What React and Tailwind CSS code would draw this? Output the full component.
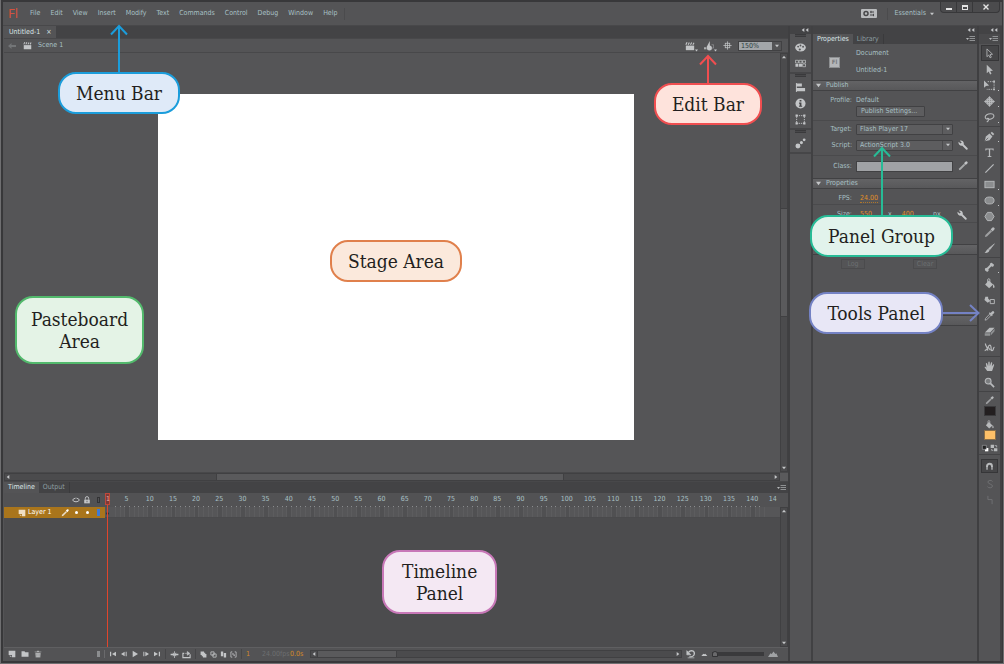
import clsx from 'clsx';

const MENUS = ['File', 'Edit', 'View', 'Insert', 'Modify', 'Text', 'Commands', 'Control', 'Debug', 'Window', 'Help'];

// All glyphs are drawn on a 12x12 grid
const GLYPHS = {
  clapper: (
    <>
      <path d="M1 5.5h10v5.5H1z" fill="currentColor" />
      <path d="M1 4.5 2.5 1.5M3.8 4.5 5.2 1.7M6.6 4.5 8 1.9M9.4 4.5 10.8 2.1" stroke="currentColor" strokeWidth="1.4" />
    </>
  ),
  symbols: (
    <>
      <path d="M7 0v7L3 7.500z" fill="currentColor" />
      <circle cx="6.500" cy="8.300" r="3" fill="currentColor" />
      <path d="M9 4.500h2.500v4H9.500" fill="none" stroke="currentColor" strokeWidth=".7" opacity=".7" />
      <path d="M0 7.500h3v2.500H0z" fill="currentColor" opacity=".8" />
    </>
  ),
  center: (
    <>
      <rect x="3" y="3" width="6" height="6" fill="none" stroke="currentColor" />
      <path d="M6 .5v11M.5 6h11" stroke="currentColor" />
    </>
  ),
  palette: (
    <>
      <ellipse cx="6" cy="6" rx="5.8" ry="4.4" fill="currentColor" />
      <circle cx="3.4" cy="5" r="1" fill="#545456" />
      <circle cx="6" cy="3.8" r="1" fill="#545456" />
      <circle cx="8.8" cy="5.2" r="1" fill="#545456" />
      <circle cx="5.2" cy="8.2" r="1.2" fill="#545456" />
    </>
  ),
  swatches: (
    <>
      <path d="M.5 2.5h3.2v3H.5zM4.4 2.5h3.2v3H4.4zM8.3 2.5h3.2v3H8.3z" fill="none" stroke="currentColor" strokeWidth=".8" />
      <path d="M.5 6.5h3.2v3H.5zM4.4 6.5h3.2v3H4.4z" fill="currentColor" />
      <path d="M8.3 6.5h3.2v3H8.3z" fill="none" stroke="currentColor" strokeWidth=".8" />
    </>
  ),
  align: <path d="M1 1h1v10H1zM2 1.500h5.500V5H2zM2 6.500h9V10H2z" fill="currentColor" />,
  info: (
    <>
      <circle cx="6" cy="6" r="5.5" fill="currentColor" />
      <path d="M5 2.3h2v1.6H5zM4.4 5h2.6v3.4h.8v1.2H4.3V8.4h.8V6.2h-.7z" fill="#464648" />
    </>
  ),
  transform: (
    <>
      <rect x="1.8" y="1.8" width="8.4" height="8.4" fill="none" stroke="currentColor" strokeDasharray="1.4 1" />
      <path d="M.6.6h2.4V3H.6zM9 .6h2.4V3H9zM.6 9H3v2.4H.6zM9 9h2.4v2.4H9z" fill="currentColor" />
    </>
  ),
  motion: (
    <>
      <circle cx="3.2" cy="8.8" r="2.7" fill="currentColor" />
      <circle cx="7" cy="5" r="1.7" fill="currentColor" />
      <circle cx="10" cy="2" r="1.5" fill="currentColor" />
    </>
  ),
  wrench: (
    <path d="M2.2.8a3.6 3.6 0 0 1 4.6 4.4l4.5 4.5a1.1 1.1 0 0 1-1.6 1.6L5.2 6.8A3.6 3.6 0 0 1 .8 2.2L3 4.3 4.5 3z" fill="currentColor" />
  ),
  pencil: (
    <>
      <path d="m1 11 .6-2.2 5.6-5.6 1.6 1.6-5.6 5.6z" fill="currentColor" opacity=".75" />
      <path d="m7.2 2.6 1.7-1.7a1.500 1.500 0 0 1 2.200 2.200L9.400 4.800z" fill="currentColor" />
    </>
  ),
  subselect: <path d="M3.2 1v8.5l2-1.8 1.4 3 1.4-.7-1.4-2.9 2.7-.3z" fill="none" stroke="currentColor" strokeWidth=".9" />,
  select: <path d="M3 .8v9.4l2.2-2 1.4 3.2 1.6-.7-1.4-3.1 3-.3z" fill="currentColor" />,
  freeTransform: (
    <>
      <path d="M0 .5v8l2.2-2L5.6 6z" fill="currentColor" />
      <path d="M4 1.8h7v8.4H3" fill="none" stroke="currentColor" strokeDasharray="1.5 1" />
      <path d="M10 .6h2v2h-2zM10 9.2h2v2h-2z" fill="currentColor" />
    </>
  ),
  rotate3d: (
    <>
      <circle cx="6" cy="6" r="4" fill="currentColor" opacity=".55" />
      <path d="M6 .5v11M.5 6h11" stroke="currentColor" strokeWidth="1.1" />
      <ellipse cx="6" cy="6" rx="2.200" ry="4.8" fill="none" stroke="currentColor" />
      <ellipse cx="6" cy="6" rx="4.800" ry="2.200" fill="none" stroke="currentColor" />
    </>
  ),
  lasso: (
    <path d="M3.4 8C.8 7.2.5 4.6 3 3s7-1.5 7.7.6C11.400 6 8.600 8 5.500 8 4 8 3 7.200 4.200 6.800c1.400-.3 1.200 3-1.200 4.200" fill="none" stroke="currentColor" strokeWidth="1.2" />
  ),
  pen: (
    <>
      <path d="M.8 11.200 2 6l4-3.200L9.200 6 6 10z" fill="currentColor" />
      <path d="M7.200 2.200 8.600.8l2.600 2.600-1.400 1.400z" fill="currentColor" />
      <path d="m1.200 10.800 3.400-3.400" stroke="#545456" strokeWidth=".8" />
    </>
  ),
  text: <path d="M1.500 1.500h9v2.400h-.8l-.5-1.300H6.700v7.200l1.400.4v.8H3.900v-.8l1.400-.4V2.600H2.800l-.5 1.300h-.8z" fill="currentColor" />,
  line: <path d="M1.500 10.500 10.500 1.500" stroke="currentColor" strokeWidth="1.300" />,
  rect: <rect x="1" y="2.500" width="10" height="7" fill="#8b8d8f" stroke="currentColor" />,
  oval: <ellipse cx="6" cy="6" rx="5" ry="3.800" fill="#8b8d8f" stroke="currentColor" />,
  poly: <path d="M3.800 1.500h4.400L11 6l-2.800 4.500H3.800L1 6z" fill="#8b8d8f" stroke="currentColor" />,
  brush: (
    <>
      <path d="M11.400.8 6.400 7.300 5 6z" fill="currentColor" stroke="currentColor" strokeWidth=".6" />
      <path d="M4.600 6.400 6 7.900c-.6 2.500-3 3.300-5.500 2.800 1.800-.6 2-3.400 4.100-4.300z" fill="currentColor" />
    </>
  ),
  bone: (
    <path d="M1 8.200a1.500 1.500 0 0 1 2-1.700l3.500-3.400a1.600 1.600 0 1 1 3-1.200 1.600 1.600 0 1 1-1.400 2.700L4.800 8a1.600 1.600 0 1 1-2.700 1.800A1.500 1.500 0 0 1 1 8.200z" fill="currentColor" />
  ),
  bucket: (
    <>
      <path d="M5.200 2.800 10 7.200l-4.400 4L1.200 7z" fill="currentColor" />
      <path d="M4 5.500V2a1.200 1.200 0 0 1 2.400 0v3" fill="none" stroke="currentColor" />
      <path d="M10 6.500c1.800 1.500 2 4 .7 4.500-1.200 0-1-2.500-.7-4.500z" fill="currentColor" />
    </>
  ),
  inkBottle: (
    <>
      <path d="M1.500 3h3v2L7 7.500 4 9.500.500 6.500z" fill="currentColor" />
      <path d="M6.800 6h4.500v4.500H6.800z" fill="none" stroke="currentColor" />
    </>
  ),
  eyedropper: (
    <>
      <path d="M7.200 3.200 8.800 1.500a1.400 1.400 0 0 1 2 2L9 5.100l.5.600-1 1-3.200-3.200 1-1z" fill="currentColor" />
      <path d="M5.800 4.800 7.300 6.300 3 10.500l-1.800.6.500-1.900z" fill="none" stroke="currentColor" strokeWidth=".9" />
    </>
  ),
  eraser: (
    <>
      <path d="M6 2h5.500L6.800 7.200H1z" fill="currentColor" />
      <path d="M.8 7.800h5.800v2.700H.8zM7.300 7.600l4.200-4.600v2.700L7.300 10.300z" fill="#909294" />
    </>
  ),
  width: (
    <path d="M1.500 1.500c0 3 3 5 2.500 8M.8 9.500c4-.5 3-6 5.500-6s.5 6 2.500 6 1-4 2.700-3.500M4 5l3 4" fill="none" stroke="currentColor" strokeWidth="1.300" />
  ),
  hand: (
    <path d="M3.500 11 .6 6.800c.6-.8 1.400-.4 2.200.5L2 3c.1-1 1.200-1 1.500 0l1 2.600L4.700 1.400c.2-1 1.400-1 1.500 0l.2 4.100 1.200-3.600c.4-.9 1.500-.5 1.400.4L8.500 6l1.300-2c.6-.7 1.500-.2 1.200.6L8.800 11z" fill="currentColor" />
  ),
  zoom: (
    <>
      <circle cx="4.500" cy="4.500" r="3.200" fill="#7b7d7f" stroke="currentColor" strokeWidth="1.200" />
      <path d="m7 7 4 4" stroke="currentColor" strokeWidth="1.900" />
    </>
  ),
  magnet: (
    <>
      <path d="M2.700 10V5.500a3.300 3.300 0 0 1 6.600 0V10" fill="none" stroke="currentColor" strokeWidth="2.600" />
      <path d="M1.200 8h3M7.800 8h3" stroke="#3e3e40" strokeWidth=".8" />
    </>
  ),
  smooth: <path d="M9 3C8 1 3.500 1.200 3.500 3.700S9 6 9 8.500 4 11.200 3 9.200" fill="none" stroke="currentColor" />,
  straighten: <path d="M3.500 1v4.500h5V11" fill="none" stroke="currentColor" />,
  defaultColors: (
    <>
      <path d="M6 6h5v5H6z" fill="#fff" />
      <path d="M2 2h6v6H2z" fill="#222" stroke="currentColor" strokeWidth=".8" />
    </>
  ),
  swapColors: (
    <>
      <path d="M1 1h5v5H1zM6 6.500h5V11H6z" fill="currentColor" />
      <path d="M7 2.500h3v2.500M5 9.500H2.500V7.500" fill="none" stroke="currentColor" strokeWidth="1.200" />
    </>
  ),
  eye: (
    <>
      <path d="M.8 6C3 2.500 9 2.500 11.200 6 9 9.500 3 9.500.8 6z" fill="none" stroke="currentColor" strokeWidth="1.500" />
      <circle cx="6" cy="5.200" r="1.800" fill="#545456" />
    </>
  ),
  lock: (
    <>
      <path d="M1.800 5.500h8.400V11H1.800z" fill="currentColor" />
      <path d="M3.500 5.500V3.400a2.500 2.500 0 0 1 5 0v2.100" fill="none" stroke="currentColor" strokeWidth="1.400" />
      <path d="M5.400 7.200h1.200v2H5.400z" fill="#545456" />
    </>
  ),
  layer: <path d="M1 1h10v10H6V7.500H1zM1.500 8.500 5 11V8.500z" fill="currentColor" />,
  folder: <path d="M.8 2h4.500l1 1.500h5V10H.8z" fill="currentColor" />,
  trash: <path d="M4.300 1h3.400v1.200H11v1.200H1V2.200h3.300zM1.800 4.300h8.400L9.500 11.400h-7zM4 5.500v4.600M6 5.500v4.600M8 5.500v4.600" fill="currentColor" stroke="#545456" strokeWidth=".5" />,
  first: <path d="M1.500 2.500h1.800v7H1.500zM10.500 2.500v7L4.500 6z" fill="currentColor" />,
  stepBack: <path d="M7 2.500v7L1.500 6zM8.500 2.500H10v7H8.500z" fill="currentColor" />,
  play: <path d="M2.500 1v10L10.500 6z" fill="currentColor" />,
  stepForward: <path d="M5 2.500v7L10.500 6zM2 2.500h1.500v7H2z" fill="currentColor" />,
  last: <path d="M8.700 2.500h1.800v7H8.700zM1.500 2.500v7L7.500 6z" fill="currentColor" />,
  centerFrame: <path d="M.8 5h3V3L6 6 3.800 9V7h-3zM11.200 5h-3V3L6 6l2.200 3V7h3zM5.500 1.500h1v9h-1z" fill="currentColor" />,
  loop: (
    <>
      <path d="M3 4.500H1.200v5.700h9.600V5.500" fill="none" stroke="currentColor" strokeWidth="1.500" />
      <path d="M4 4.500h3V2l3.500 2.500L7 7V4.500" fill="currentColor" stroke="currentColor" strokeWidth=".8" />
    </>
  ),
  onion: <path d="M1 1h6v2h2v2h2v6H5V9H3V7H1z" fill="currentColor" />,
  onionOutline: <path d="M1.500 1.500h5.500V7H1.500zM5 5h5.500v5.500H5z" fill="none" stroke="currentColor" strokeWidth="1.400" />,
  editFrames: <path d="M1.500 1h4v8h-4zM6.500 3.500h4V11h-4z" fill="currentColor" />,
  markers: <path d="M4 1.500H1.500v9H4M8 1.500h2.500v9H8M4.500 4.500h1.200v1.200H4.500zM6.500 6.500h1.200v1.200H6.500z" fill="none" stroke="currentColor" strokeWidth="1.300" />,
  undo: (
    <>
      <path d="M3 4c3-3.500 7.500-1.500 7 2S6.500 9.500 4 9.500" fill="none" stroke="currentColor" strokeWidth="1.600" />
      <path d="M1 2v5h5zM2 10.600h8" fill="currentColor" stroke="currentColor" strokeWidth=".8" />
    </>
  ),
  hillSmall: <path d="M2 9 5 5.500 6.500 6.500 8 5.500 11 9z" fill="currentColor" />,
  hillLarge: <path d="M0 9.500 3 5l1.500 1L6.500 3 9 6l1-1 2 4.500z" fill="currentColor" />,
};

function Glyph({ name, className = 'size-[11px]' }) {
  return (
    <svg viewBox="0 0 12 12" aria-hidden="true" className={clsx('shrink-0', className)}>
      {GLYPHS[name]}
    </svg>
  );
}

function Triangle({ dir = 'down', className }) {
  const d = {
    down: 'M0 1h6L3 5z',
    up: 'M0 5h6L3 1z',
    left: 'M5 0v6L1 3z',
    right: 'M1 0v6l4-3z',
  }[dir];
  return (
    <svg viewBox="0 0 6 6" aria-hidden="true" className={clsx('size-1 shrink-0 fill-[#c4c6c8]', className)}>
      <path d={d} />
    </svg>
  );
}

function PanelMenu() {
  return (
    <button aria-label="Panel menu" className="ml-auto flex items-center px-0.5">
      <svg viewBox="0 0 9 6" className="h-[6px] w-[9px]">
        <path d="M0 2h3L1.500 4z" fill="#b5b7b9" />
        <path d="M3.500.5H9M3.500 2.500H9M3.500 4.500H9" stroke="#8f9193" />
      </svg>
    </button>
  );
}

function CollapseBar() {
  return (
    <div className="flex h-2 shrink-0 items-center justify-end bg-[#434345] pr-0.5">
      <Triangle dir="left" className="fill-[#a5a7a9]" />
      <Triangle dir="left" className="fill-[#a5a7a9]" />
    </div>
  );
}

function MenuBar() {
  return (
    <header className="flex h-[23px] shrink-0 items-stretch">
      <span className='w-[27px] pt-px pl-[5px] font-["Noto_Sans",sans-serif] text-[13px] leading-5 text-[#d4523f]'>Fl</span>
      <nav className="flex items-center gap-2.5">
        {MENUS.map((m) => (
          <button key={m}>{m}</button>
        ))}
        <span className="-ml-1 h-3 w-px bg-[#4b4b4d]" />
      </nav>
      <div className="ml-auto flex items-center">
        <svg viewBox="0 0 16 9" className="h-[9px] w-4" aria-hidden="true">
          <rect width="16" height="9" rx="1" fill="#b9bbbd" />
          <circle cx="5" cy="4.500" r="2" fill="none" stroke="#48484a" strokeWidth="1.500" />
          <path d="M9 3h4M9 6h4M10 1.800v2.400M12.500 4.800v2.400" stroke="#48484a" />
        </svg>
        <span className="ml-2.5 h-3 w-px bg-[#4b4b4d]" />
        <button className="ml-1.5 flex items-center gap-1">
          Essentials <Triangle />
        </button>
      </div>
      <div className="mr-0.5 ml-1.5 flex h-[11px] items-center rounded-b-sm border border-t-0 border-[#38383a] bg-[#4b4b4d] text-[#e4e4e4]">
        <button aria-label="Minimize" className="flex h-full w-4 items-end justify-center border-r border-[#38383a] pb-0.5">
          <span className="h-0.5 w-1.5 bg-current" />
        </button>
        <button aria-label="Maximize" className="flex h-full w-4 items-center justify-center border-r border-[#38383a]">
          <span className="h-[5px] w-1.5 border border-t-2 border-current" />
        </button>
        <button aria-label="Close" className="flex h-full w-[26px] items-center justify-center">
          <svg viewBox="0 0 6 6" className="size-1.5">
            <path d="m.5.5 5 5M5.500.5l-5 5" stroke="currentColor" strokeWidth="1.400" />
          </svg>
        </button>
      </div>
    </header>
  );
}

function EditBar() {
  return (
    <>
      <div className="flex h-[12px] shrink-0 items-stretch bg-[#434345]">
        <div className="flex items-center gap-1.5 bg-[#545456] px-[5px] text-[#dbe6e8]">
          Untitled-1
          <button aria-label="Close document">×</button>
        </div>
      </div>
      <div className="flex h-[15px] shrink-0 items-center border-y border-[#48484a] pr-1.5 pl-1">
        <svg viewBox="0 0 8 6" className="h-1.5 w-2" aria-hidden="true">
          <path d="M0 3 3.500 0v2H8v2H3.500v2z" fill="#737577" />
        </svg>
        <Glyph name="clapper" className="mr-1.5 ml-[7px] size-[9px] text-[#c3c5c7]" />
        <span>Scene 1</span>
        <div className="ml-auto flex items-center gap-1.5 text-[#c3c5c7]">
          <button aria-label="Edit scene" className="flex items-end">
            <Glyph name="clapper" className="size-[10px]" />
            <Triangle className="-mb-px size-[3px]" />
          </button>
          <button aria-label="Edit symbols" className="flex items-end">
            <Glyph name="symbols" className="size-[10px]" />
            <Triangle className="-mb-px size-[3px]" />
          </button>
          <button aria-label="Center stage">
            <Glyph name="center" className="block size-[9px]" />
          </button>
          <div className="flex h-[10px] border border-[#414143]">
            <input
              aria-label="Zoom"
              defaultValue="150%"
              className="w-[33px] bg-[#a3a6a9] px-0.5 text-[7px] leading-none text-[#2c3c40]"
            />
            <button aria-label="Zoom levels" className="flex w-[9px] items-center justify-center">
              <Triangle />
            </button>
          </div>
        </div>
      </div>
    </>
  );
}

function Scrollbar({ vertical = false, children }) {
  return (
    <div
      className={clsx(
        'flex items-center justify-between border border-[#404042] bg-[#4b4b4d]',
        vertical ? 'w-2 shrink-0 flex-col' : 'h-2 min-w-0 flex-1',
      )}
    >
      <Triangle dir={vertical ? 'up' : 'left'} className="m-px" />
      {children}
      <Triangle dir={vertical ? 'down' : 'right'} className="m-px" />
    </div>
  );
}

function Pasteboard() {
  return (
    <>
      <div className="flex min-h-0 flex-1">
        <div className="relative flex flex-1 items-center justify-center overflow-hidden bg-[#555557] pt-2 pl-2">
          <div className="flex h-[346px] w-[476px] shrink-0 items-center justify-center bg-white pb-3">
            <Callout className="border-[#e0804c] bg-[#fbe9dc] px-4 py-2">Stage Area</Callout>
          </div>
          <Callout className="absolute top-[243px] left-[11px] border-[#52b96c] bg-[#e4f3e6] px-3.5 py-2.5">
            Pasteboard
            <br />
            Area
          </Callout>
        </div>
        <Scrollbar vertical>
          <span className="h-[26%] w-full border-y border-[#404042] bg-[#5a5a5c]" />
        </Scrollbar>
      </div>
      <div className="flex shrink-0 border-y border-[#48484a]">
        <Scrollbar>
          <span className="-ml-1 h-full w-[45%] border-x border-[#404042] bg-[#5a5a5c]" />
        </Scrollbar>
        <span className="w-2 bg-[#5a5a5c]" />
      </div>
    </>
  );
}

const RULER = Array.from({ length: 28 }, (_, i) => (i + 1) * 5);

function Ruler() {
  return (
    <div className="flex min-w-0 flex-1 items-stretch pr-2">
      <div className="flex w-[10px] shrink-0 justify-start">
        <span className="h-3 w-[5px] border border-[#c0483a] bg-[#7d3b38] text-center leading-[10px] text-[#e9b1a8]">1</span>
      </div>
      {RULER.map((n) => (
        <div key={n} className="flex min-w-0 flex-1 flex-col justify-between text-center">
          <span className="leading-[13px]">{n}</span>
          <span className="flex h-px">
            {[0, 1, 2, 3, 4].map((t) => (
              <i key={t} className="flex-1 border-l border-[#8a8c8e]" />
            ))}
          </span>
        </div>
      ))}
      <span className="w-4 shrink-0 overflow-hidden pl-[5px] leading-[13px]">14</span>
    </div>
  );
}

function Frames() {
  return (
    <div className="flex h-[11px] min-w-0 shrink-0 border-b border-[#4a4a4c] bg-[#565658]">
      <div className="flex w-[10px] shrink-0 items-end">
        <span className="mb-0.5 ml-px size-[3px] rounded-full border border-[#2c2c2e]" />
      </div>
      {RULER.map((n) => (
        <div key={n} className="flex min-w-0 flex-1">
          {[0, 1, 2, 3, 4].map((t) => (
            <i key={t} className={clsx('flex-1 border-l border-[#5c5c5e]', t === 2 && 'bg-[#505052]')} />
          ))}
        </div>
      ))}
      <span className="w-4 shrink-0 border-l border-[#5c5c5e]" />
    </div>
  );
}

function TimelineFooter() {
  const divider = <span className="h-2.5 w-px bg-[#464648]" />;
  return (
    <div className="flex h-[14px] shrink-0 items-center border-t border-[#5f5f61] bg-[#535355] pb-px text-[#c3c5c7]">
      <div className="flex w-[101px] shrink-0 items-center gap-1 border-r border-[#6a6a6c] pl-1">
        {['layer', 'folder', 'trash'].map((g) => (
          <button key={g} aria-label={g}>
            <Glyph name={g} className="mr-px block size-2" />
          </button>
        ))}
        <span className="mr-1 ml-auto h-1.5 w-[3px] bg-[#8b8d8f]" />
      </div>
      <div className="flex items-center gap-[3px] px-1">
        {['first', 'stepBack', 'play', 'stepForward', 'last'].map((g) => (
          <button key={g} aria-label={g}>
            <Glyph name={g} className="block size-2" />
          </button>
        ))}
      </div>
      {divider}
      <div className="flex items-center gap-[3px] px-1">
        {['centerFrame', 'loop'].map((g) => (
          <button key={g} aria-label={g}>
            <Glyph name={g} className="block size-[9px]" />
          </button>
        ))}
      </div>
      {divider}
      <div className="flex items-center gap-[3px] px-1">
        {['onion', 'onionOutline', 'editFrames', 'markers'].map((g) => (
          <button key={g} aria-label={g}>
            <Glyph name={g} className="block size-[7px]" />
          </button>
        ))}
      </div>
      {divider}
      <span className="w-[20px] pl-1 text-[#d48a2a]">1</span>
      <span className="w-7 whitespace-nowrap text-[#6d6f71]">24.00fps</span>
      <span className="mr-1.5 w-3.5 whitespace-nowrap text-[#d48a2a]">0.0s</span>
      <Scrollbar>
        <span className="mr-auto h-full w-20 border-x border-[#404042] bg-[#5a5a5c]" />
      </Scrollbar>
      <button aria-label="Reset timeline zoom" className="mx-1">
        <Glyph name="undo" className="block size-[10px]" />
      </button>
      <Glyph name="hillSmall" className="mr-1 size-2" />
      <input
        type="range"
        aria-label="Timeline zoom"
        defaultValue="0"
        className="h-1 w-[52px] appearance-none bg-[#3a3a3c] [&::-webkit-slider-thumb]:h-1.5 [&::-webkit-slider-thumb]:w-1.5 [&::-webkit-slider-thumb]:appearance-none [&::-webkit-slider-thumb]:rounded-t-full [&::-webkit-slider-thumb]:border [&::-webkit-slider-thumb]:border-[#333335] [&::-webkit-slider-thumb]:bg-[#6a6a6c]"
      />
      <Glyph name="hillLarge" className="mr-2.5 ml-1 size-[10px] text-[#a0a2a4]" />
    </div>
  );
}

function Timeline() {
  return (
    <section className="relative flex h-[179px] shrink-0 flex-col">
      <div className="flex h-[11px] shrink-0 items-stretch bg-[#434345]">
        <button className="bg-[#545456] px-1 text-[#dbe6e8]">Timeline</button>
        <button className="border-r border-[#3a3a3c] px-1 text-[#8c9ea1]">Output</button>
        <PanelMenu />
      </div>
      <div className="flex h-[14px] shrink-0 bg-[#525254]">
        <div className="flex w-[101px] shrink-0 items-center justify-end gap-[3px] pr-[5px] text-[#c3c5c7]">
          <Glyph name="eye" className="size-2" />
          <Glyph name="lock" className="size-2" />
          <span className="ml-[3px] h-1.5 w-[3px] border border-[#333335]" />
        </div>
        <Ruler />
      </div>
      <div className="flex min-h-0 flex-1 bg-[#4c4c4e]">
        <div className="w-[101px] shrink-0">
          <div className="flex h-[11px] items-center bg-[#a9751c] pr-[5px] pl-3.5 text-white">
            <Glyph name="layer" className="mr-0.5 size-2 text-[#f0dfc4]" />
            <span>Layer 1</span>
            <Glyph name="pencil" className="mr-1.5 ml-auto size-2" />
            <span className="mr-2 size-[3px] rounded-full bg-white" />
            <span className="mr-2 size-[3px] rounded-full bg-white" />
            <span className="h-[7px] w-[3px] bg-[#3f7ad6]" />
          </div>
        </div>
        <div className="min-w-0 flex-1">
          <Frames />
        </div>
        <Scrollbar vertical />
      </div>
      <TimelineFooter />
      {/* playhead */}
      <div className="absolute top-[23px] bottom-[14px] left-[103px] z-10 w-px bg-[#e0452c]" />
      <Callout className="absolute top-[68px] left-1/2 -ml-3.5 border-[#c878b8] bg-[#f4e8f3] px-[18px] py-2">
        Timeline
        <br />
        Panel
      </Callout>
    </section>
  );
}

const DOCK = [['palette', 'swatches'], ['align', 'info', 'transform'], ['motion']];

function IconDock() {
  return (
    <aside className="flex w-[23px] shrink-0 flex-col border-r-2 border-[#414143]">
      <CollapseBar />
      {DOCK.map((group) => (
        <div key={group[0]} className="flex flex-col items-center gap-[5px] border-b-2 border-[#464648] pb-[3px] text-[#c3c5c7]">
          <span className="h-[3px] w-[11px] border-y border-[#3a3a3c] bg-[#48484a]" />
          {group.map((g) => (
            <button key={g} aria-label={g}>
              <Glyph name={g} className="block size-[11px]" />
            </button>
          ))}
        </div>
      ))}
    </aside>
  );
}

function SectionHeader({ children, open = true }) {
  return (
    <h2 className="flex h-[11px] shrink-0 items-center gap-[5px] border-y border-[#414143] bg-linear-to-b from-[#636365] to-[#58585a] pl-[3px]">
      {open && <Triangle className="size-[5px]" />}
      {children}
    </h2>
  );
}

function SelectRow({ id, label, value, children }) {
  return (
    <div className="flex h-4 items-center">
      <label htmlFor={id} className="w-[43px] shrink-0 pr-1 text-right">
        {label}
      </label>
      <div className="relative flex h-[11px] flex-1 rounded-[1px] border border-[#414143] bg-[#5d5d5f]">
        <select id={id} className="w-full appearance-none px-[3px] text-[7px] leading-[9px]">
          <option>{value}</option>
        </select>
        <span className="pointer-events-none absolute inset-y-0 right-0 flex w-[10px] items-center justify-center border-l border-[#4a4a4c]">
          <Triangle />
        </span>
      </div>
      <span className="flex w-6 shrink-0 pl-[5px] text-[#c3c5c7]">{children}</span>
    </div>
  );
}

function PropertiesPanel() {
  return (
    <aside className="flex w-[166px] shrink-0 flex-col border-r-2 border-[#3f3f41]">
      <CollapseBar />
      <div className="flex h-[10px] shrink-0 items-stretch bg-[#434345]">
        <button className="bg-[#545456] px-1 text-[#dbe6e8]">Properties</button>
        <button className="border-r border-[#3a3a3c] px-1 text-[#8c9ea1]">Library</button>
        <PanelMenu />
      </div>
      <div className="flex h-9 shrink-0 items-center pl-4">
        <span className="mr-4 flex size-[11px] items-center justify-center border border-[#8d8f91] bg-[#b4b6b8] text-[6px] leading-none font-bold text-[#77797b]">
          Fl
        </span>
        <div className="flex flex-col gap-2 leading-[9px]">
          <span>Document</span>
          <span>Untitled-1</span>
        </div>
      </div>
      <SectionHeader>Publish</SectionHeader>
      <div className="shrink-0 border-b border-[#4a4a4c] pt-1 pb-[3px]">
        <div className="flex leading-[11px]">
          <span className="w-[43px] pr-1 text-right">Profile:</span>
          <span>Default</span>
        </div>
        <button className="ml-[43px] block h-[11px] w-[69px] rounded-[1px] border border-[#414143] bg-[#5d5d5f] pl-1 text-left leading-[9px]">
          Publish Settings...
        </button>
      </div>
      <div className="shrink-0 border-b border-[#4a4a4c] pb-0.5">
        <SelectRow id="target" label="Target:" value="Flash Player 17" />
        <SelectRow id="script" label="Script:" value="ActionScript 3.0">
          <Glyph name="wrench" className="size-[10px]" />
        </SelectRow>
      </div>
      <div className="flex h-[22px] shrink-0 items-center pb-0.5">
        <label htmlFor="doc-class" className="w-[43px] shrink-0 pr-1 text-right">
          Class:
        </label>
        <input id="doc-class" className="h-[11px] min-w-0 flex-1 border border-[#414143] bg-[#a0a2a5]" />
        <span className="w-6 shrink-0 pl-[5px] text-[#c3c5c7]">
          <Glyph name="pencil" className="size-[10px]" />
        </span>
      </div>
      <SectionHeader>Properties</SectionHeader>
      <div className="flex h-4 shrink-0 items-center border-b border-[#4a4a4c] pt-1">
        <span className="w-[43px] pr-1 text-right">FPS:</span>
        <button className="ml-1 border-b border-dotted border-[#b0762a] leading-2 text-[#e08f28]">24.00</button>
      </div>
      <div className="flex h-[18px] shrink-0 items-center border-b border-[#4a4a4c] pt-0.5">
        <span className="w-[43px] pr-1 text-right">Size:</span>
        <button className="ml-1 text-[#e08f28]">550</button>
        <span className="ml-4">x</span>
        <button className="ml-2.5 text-[#e08f28]">400</button>
        <span className="ml-auto w-6">px</span>
        <Glyph name="wrench" className="mr-2.5 size-[10px] text-[#c3c5c7]" />
      </div>
      <div className="h-[21px] shrink-0" />
      <SectionHeader open={false} />
      <div className="flex h-[60px] shrink-0 items-start gap-12 pt-1 pl-7 text-[#6b6f71]">
        <button className="h-[10px] w-6 border border-[#4b4b4d] leading-2">Log</button>
        <button className="h-[10px] w-6 border border-[#4b4b4d] leading-2">Clear</button>
      </div>
      <SectionHeader open={false} />
    </aside>
  );
}

const TOOL_GROUPS = [
  ['subselect', 'select', 'freeTransform', 'rotate3d', 'lasso'],
  ['pen', 'text', 'line', 'rect', 'oval', 'poly', 'pencil', 'brush'],
  ['bone', 'bucket', 'inkBottle', 'eyedropper', 'eraser', 'width'],
  ['hand', 'zoom'],
];
const HAS_FLYOUT = ['freeTransform', 'rotate3d', 'lasso', 'pen', 'rect', 'oval', 'bone'];

function ToolsPanel() {
  return (
    <aside className="flex w-[23px] shrink-0 flex-col border-r-2 border-[#414143] text-[#b8babc]">
      <CollapseBar />
      <div className="flex h-[10px] shrink-0 bg-[#4a4a4c]">
        <PanelMenu />
      </div>
      {TOOL_GROUPS.map((group) => (
        <div key={group[0]} className="border-b border-[#434345] py-px">
          {group.map((tool) => (
            <button
              key={tool}
              aria-label={tool}
              className={clsx(
                'relative mx-auto flex h-4 w-[18px] items-center justify-center',
                tool === 'subselect' && 'border border-[#363638] bg-[#464648]',
              )}
            >
              <Glyph name={tool} />
              {HAS_FLYOUT.includes(tool) && <span className="absolute right-0 bottom-0.5 size-px bg-[#c3c5c7]" />}
            </button>
          ))}
        </div>
      ))}
      <div className="flex flex-col items-center border-b border-[#434345] pt-1">
        <Glyph name="pencil" className="size-[9px]" />
        <button aria-label="Stroke color" className="mt-px h-[10px] w-3 border border-[#3a3a3c] bg-[#231f20]" />
        <Glyph name="bucket" className="mt-1 size-[9px]" />
        <button aria-label="Fill color" className="mt-px h-[10px] w-3 border border-[#8a6f48] bg-[#fdc068]" />
        <div className="flex gap-px pt-1 pb-0.5">
          <button aria-label="Default colors">
            <Glyph name="defaultColors" className="block size-2" />
          </button>
          <button aria-label="Swap colors">
            <Glyph name="swapColors" className="block size-2" />
          </button>
        </div>
      </div>
      <div className="flex flex-col items-center gap-1.5 pt-1">
        <button aria-label="Snap to objects" className="flex h-[14px] w-[17px] items-center justify-center border border-[#363638] bg-[#464648]">
          <Glyph name="magnet" className="size-[9px]" />
        </button>
        <Glyph name="smooth" className="size-[10px] text-[#737577]" />
        <Glyph name="straighten" className="size-[10px] text-[#737577]" />
      </div>
    </aside>
  );
}

function Callout({ className, children }) {
  return (
    <div
      className={clsx(
        'rounded-[18px] border-2 text-center font-["DejaVu_Serif_Condensed","DejaVu_Serif",serif] text-[19px] leading-[22px] whitespace-nowrap text-[#231f20]',
        className,
      )}
    >
      {children}
    </div>
  );
}

function ArrowUp({ className, length }) {
  return (
    <svg width="20" height={length} aria-hidden="true" className={clsx('block', className)} fill="none" strokeWidth="2">
      <path d={`M10 ${length}V2M2 10.500 10 2l8 8.500`} stroke="currentColor" />
    </svg>
  );
}

export default function App() {
  return (
    <div className='relative flex h-screen flex-col overflow-hidden border-x border-b border-x-[#6f6f71] border-b-[#6f6f71] bg-[#545456] font-["DejaVu_Sans_Condensed","Noto_Sans",sans-serif] text-[7px] leading-[9px] text-[#a8c0c5]'>
      <div className="flex min-h-0 flex-1 flex-col border-2 border-r-1 border-[#38383a]">
        <MenuBar />
        <div className="flex min-h-0 flex-1 border-t border-[#48484a] pl-px">
          <main className="flex min-w-0 flex-1 flex-col border-r-2 border-[#3f3f41]">
            <EditBar />
            <Pasteboard />
            <Timeline />
          </main>
          <IconDock />
          <PropertiesPanel />
          <ToolsPanel />
        </div>
      </div>

      {/* Labels over the workspace */}
      <div className="pointer-events-none absolute top-6 left-[57px] flex flex-col items-center">
        <ArrowUp length={50} className="text-[#1b9ddb]" />
        <Callout className="-mt-0.5 border-[#1b9ddb] bg-[#dfeaf8] px-4 py-2">Menu Bar</Callout>
      </div>
      <div className="pointer-events-none absolute top-[54px] right-[241px] flex flex-col items-center">
        <ArrowUp length={31} className="text-[#f04e50]" />
        <Callout className="-mt-0.5 border-[#f04e50] bg-[#fee3dc] px-4 py-2">Edit Bar</Callout>
      </div>
      <div className="pointer-events-none absolute top-[146px] right-[50px] flex flex-col items-center">
        <ArrowUp length={71} className="text-[#27bb96]" />
        <Callout className="-mt-0.5 border-[#27bb96] bg-[#e2f3ec] px-4 py-2">Panel Group</Callout>
      </div>
      <div className="pointer-events-none absolute top-[292px] right-[23px] flex items-center">
        <Callout className="border-[#7482c4] bg-[#e8e7f6] px-4 py-2">Tools Panel</Callout>
        <svg width="37" height="20" aria-hidden="true" fill="none" stroke="#7482c4" strokeWidth="2">
          <path d="M0 10h35M27 2l8.500 8-8.500 8" />
        </svg>
      </div>
    </div>
  );
}
